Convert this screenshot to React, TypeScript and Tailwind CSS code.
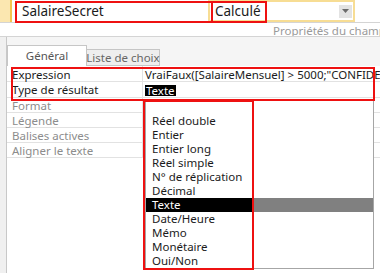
import React from "react";

const listItems = [
  "",
  "Réel double",
  "Entier",
  "Entier long",
  "Réel simple",
  "N° de réplication",
  "Décimal",
  "Texte",
  "Date/Heure",
  "Mémo",
  "Monétaire",
  "Oui/Non",
];

const disabledRows = ["Format", "Légende", "Balises actives", "Aligner le texte"];

export default function App() {
  return (
    <div className="relative flex w-[380px] h-[273px] overflow-hidden bg-white font-['Noto_Sans',sans-serif] text-[#1b1b1b]">
      {/* window edge */}
      <div className="w-[3px] bg-[#d9d9d9]" />

      <div className="flex flex-1 flex-col">
        {/* field row */}
        <div className="flex h-[23px] border-b border-[#d4d4d4]">
          <div className="w-[12px] bg-[#fbe7b0] border-r-2 border-[#f3c64f]" />
          <div className="w-[196px] pl-[10px] text-[13.5px] leading-[22px] whitespace-nowrap">SalaireSecret</div>
          <div className="flex w-[147px] h-[22px] items-center border-2 border-[#f7dd94] pl-[5px] text-[13.5px] leading-[18px]">
            <span className="flex-1">Calculé</span>
            <span className="mr-[1px] flex h-[13px] w-[13px] items-center justify-center bg-[#e3e3e3]">
              <svg width="7" height="4" viewBox="0 0 7 4">
                <path d="M0 0h7L3.5 4z" fill="#6b6b6b" />
              </svg>
            </span>
          </div>
          <div className="flex-1" />
        </div>

        {/* header */}
        <div className="h-[14px] border-b border-[#d4d4d4] pl-[273px] pt-[1px] text-[11.5px] leading-[14px] text-[#9a9a9a] whitespace-nowrap overflow-hidden">
          Propriétés du champ
        </div>

        {/* property panel */}
        <div className="flex flex-1">
          <div className="w-[7px] bg-[#f0f0f0] border-r border-[#c8c8c8]" />
          <div className="flex flex-1 flex-col">
            <div className="flex h-[29px] items-end bg-[#f5f5f5] pr-[7px]">
              <div className="flex h-[21px] w-[80px] items-center justify-center border border-b-0 border-[#c6c6c6] bg-white text-[11.5px] leading-[14px] text-[#555]">
                Général
              </div>
              <div className="flex h-[17px] w-[73px] items-center justify-center border border-l-0 border-[#c6c6c6] bg-[#eeeeee] text-[11.5px] leading-[14px] text-[#666] whitespace-nowrap">
                Liste de choix
              </div>
            </div>

            <div className="mr-[7px] flex flex-col text-[11.5px]">
              <div className="flex h-[16px] border-b border-[#e2e2e2]">
                <div className="w-[136px] pl-[5px] pt-[2px] leading-[14px] border-r border-[#e2e2e2] whitespace-nowrap">Expression</div>
                <div className="flex-1 overflow-hidden whitespace-nowrap pl-[2px] pt-[2px] leading-[14px]">
                  VraiFaux([SalaireMensuel] &gt; 5000;"CONFIDENTIEL";[SalaireMensuel])
                </div>
              </div>
              <div className="flex h-[16px] border-b border-[#e2e2e2]">
                <div className="w-[136px] pl-[5px] pt-[1px] leading-[14px] border-r border-[#e2e2e2] whitespace-nowrap">Type de résultat</div>
                <div className="flex flex-1 items-center pl-[2px] pt-[1px]">
                  <span className="bg-black px-[1px] text-white leading-[11px]">Texte</span>
                  <span className="flex-1" />
                  <span className="flex h-[10px] w-[14px] items-center justify-center border border-[#7ea6d3] bg-gradient-to-b from-[#e4f0fb] to-[#b5d3ee]">
                    <svg width="7" height="4" viewBox="0 0 7 4">
                      <path d="M0 0h7L3.5 4z" fill="#000" />
                    </svg>
                  </span>
                </div>
              </div>
              {disabledRows.map((r) => (
                <div key={r} className="flex h-[15px] border-b border-[#e2e2e2]">
                  <div className="w-[136px] pl-[5px] pt-[1px] leading-[14px] text-[#8c8c8c] border-r border-[#e2e2e2] whitespace-nowrap">{r}</div>
                  <div className="flex-1" />
                </div>
              ))}
            </div>
          </div>
        </div>
      </div>

      {/* open dropdown list */}
      <div className="absolute left-[145px] top-[99px] w-[229px] h-[170px] border border-[#a6a6a6] bg-white text-[11.5px]">
        {listItems.map((it, i) =>
          it === "Texte" ? (
            <div key={i} className="flex h-[14px]">
              <div className="w-[108px] bg-black pl-[6px] leading-[14px] text-white">{it}</div>
              <div className="flex-1 bg-[#808080]" />
            </div>
          ) : (
            <div key={i} className="h-[14px] pl-[6px] leading-[14px] whitespace-nowrap">
              {it}
            </div>
          )
        )}
      </div>

      {/* red annotations */}
      <div className="absolute left-[15px] top-[1px] w-[198px] h-[22px] border-2 border-[#ee1111]" />
      <div className="absolute left-[211px] top-[1px] w-[56px] h-[22px] border-2 border-[#ee1111]" />
      <div className="absolute left-[11px] top-[67px] w-[364px] h-[34px] border-2 border-[#ee1111]" />
      <div className="absolute left-[143px] top-[100px] w-[111px] h-[170px] border-2 border-[#ee1111]" />
    </div>
  );
}
